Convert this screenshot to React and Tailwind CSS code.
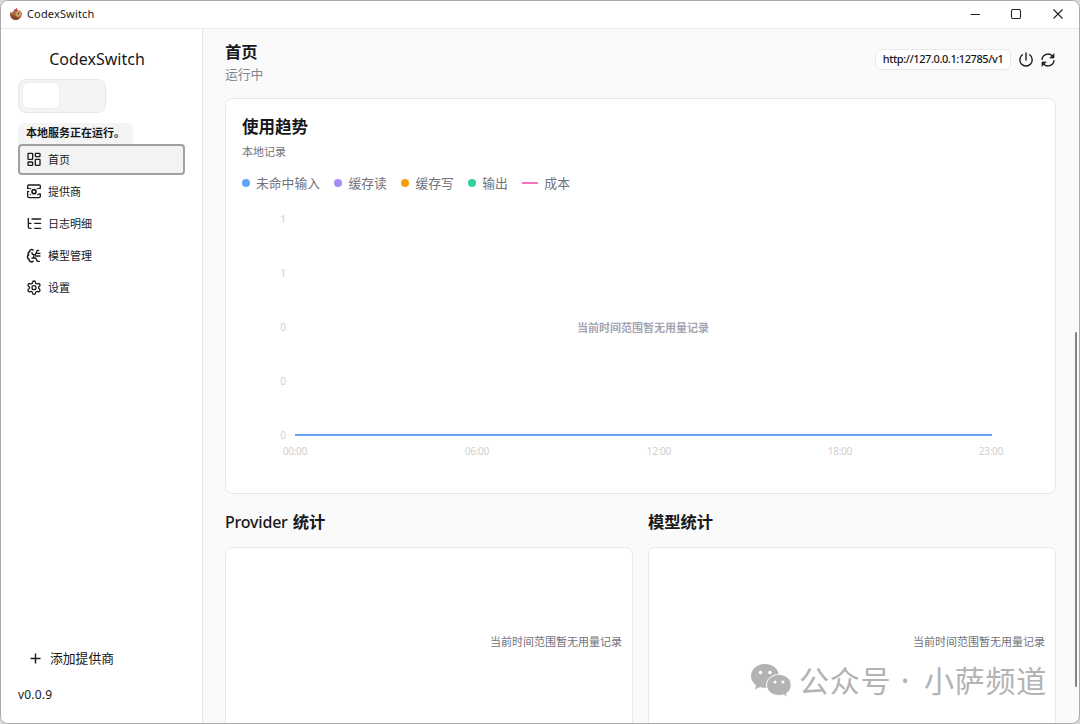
import React from "react";

const NAV = [
  { label: "首页", icon: "home", active: true },
  { label: "提供商", icon: "provider" },
  { label: "日志明细", icon: "logs" },
  { label: "模型管理", icon: "model" },
  { label: "设置", icon: "settings" },
];

const LEGEND = [
  { label: "未命中输入", dot: "bg-[#60a5fa]" },
  { label: "缓存读", dot: "bg-[#a78bfa]" },
  { label: "缓存写", dot: "bg-[#f59e0b]" },
  { label: "输出", dot: "bg-[#34d399]" },
];

const EMPTY = "当前时间范围暂无用量记录";

function NavIcon({ name }) {
  const paths = {
    home: (
      <>
        <rect x="3" y="2.500" width="7" height="9" rx="1" />
        <rect x="14" y="2.500" width="7" height="5" rx="1" />
        <rect x="14" y="11.500" width="7" height="9" rx="1" />
        <rect x="3" y="15.500" width="7" height="5" rx="1" />
      </>
    ),
    provider: (
      <>
        <path d="M2.500 7V3.500a1.500 1.500 0 0 1 1.500-1.500h16a1.500 1.500 0 0 1 1.500 1.500V7H19" />
        <path d="M2.500 11.500H4M2.500 11.500V19a2 2 0 0 0 2 2h15a2 2 0 0 0 2-2v-3.500H19" />
        <path d="M2.500 7H5M6.500 16.500h.1M17.500 16.500h.1M17 7.500h.1M7 7.500h.1" />
        <circle cx="12" cy="12" r="3" strokeWidth="2.400" />
      </>
    ),
    logs: <path d="M3.500 4v13a2 2 0 0 0 2 2H7.500M3.500 11.500h4M9 5h13M13 11.500h9M13 19h9" />,
    model: (
      <>
        <path strokeWidth="2.300" d="M10.500 3.500C8.500 1.800 5.500 3 5.500 6 3 7 2.500 9.500 4 11 1.300 12.500 1.700 16.500 4.500 17.500 4.500 20.500 8 22.500 10.500 20.500" />
        <path d="M9 7.500c0 2 1 3 3 3h2l3-6.500h2M11.500 10.500v5M9 15.500h5.500l2.500 5h3M14.500 12.500H21M16.500 8.500H21" />
      </>
    ),
    settings: (
      <>
        <path d="M12.220 2h-.44a2 2 0 0 0-2 2v.18a2 2 0 0 1-1 1.730l-.43.25a2 2 0 0 1-2 0l-.15-.08a2 2 0 0 0-2.730.73l-.22.38a2 2 0 0 0 .73 2.730l.15.1a2 2 0 0 1 1 1.720v.51a2 2 0 0 1-1 1.740l-.15.09a2 2 0 0 0-.73 2.730l.22.38a2 2 0 0 0 2.730.73l.15-.08a2 2 0 0 1 2 0l.43.25a2 2 0 0 1 1 1.730V20a2 2 0 0 0 2 2h.44a2 2 0 0 0 2-2v-.18a2 2 0 0 1 1-1.730l.43-.25a2 2 0 0 1 2 0l.15.08a2 2 0 0 0 2.730-.73l.22-.39a2 2 0 0 0-.73-2.730l-.15-.08a2 2 0 0 1-1-1.740v-.5a2 2 0 0 1 1-1.740l.15-.09a2 2 0 0 0 .73-2.730l-.22-.38a2 2 0 0 0-2.730-.73l-.15.08a2 2 0 0 1-2 0l-.43-.25a2 2 0 0 1-1-1.730V4a2 2 0 0 0-2-2z" />
        <circle cx="12" cy="12" r="3" />
      </>
    ),
  };
  return (
    <svg viewBox="0 0.5 24 24" className="size-4 shrink-0" fill="none" stroke="#1c1c1f" strokeWidth="2" strokeLinecap="round" strokeLinejoin="round">
      {paths[name]}
    </svg>
  );
}

function AppLogo() {
  return (
    <svg viewBox="0 0 14 14" className="mb-[2px] size-[14px]">
      <path d="M1.500 4.500 2.500 6 5 3.500 9 3.200 12 4l1 3-1 3.500-3.500 2.500H5L2 10.500 1 7z" fill="#a9683c" />
      <path d="M6.500 5.500 9.500 3.500 12 4.500 12.500 8 10 10 7 9z" fill="#cf9a68" />
      <path d="M1 6.500 4 8.500l4 1.500 2.500 1L8.500 13H5L2 10.800z" fill="#84492a" />
      <path d="M5.500 4 5.300 2 6.500 2.200 7.500.8 8.500 2.500 8 4z" fill="#c93d4d" />
      <circle cx="9.500" cy="6.500" r=".7" fill="#3b2418" />
    </svg>
  );
}

function TitleBar() {
  return (
    <header className="flex h-7 shrink-0 items-center border-b border-[#ebebeb] bg-white pl-2">
      <AppLogo />
      <span className="ml-1 -mt-px text-[11px] leading-4 tracking-[0.15px]">CodexSwitch</span>
      <svg viewBox="0 0 110 28" className="mr-[2px] ml-auto h-7 w-[110px]" fill="none" stroke="#222" strokeWidth="1.100">
        <path d="M3.500 13.500h9.500" />
        <rect x="44.500" y="8.500" width="9" height="9" rx="1.200" />
        <path d="M86.500 8.500l9 9M95.500 8.500l-9 9" />
      </svg>
    </header>
  );
}

function Sidebar() {
  return (
    <aside className="flex w-[202px] shrink-0 flex-col border-r border-[#e5e5e5] bg-white px-[17px]">
      <h1 className="mt-[18px] pr-[9px] text-center text-[16px] leading-6">CodexSwitch</h1>
      <div className="mt-2 flex h-[34px] w-[88px] rounded-[8px] border border-[#e8e8e8] bg-[#f4f4f5] p-[3px] pt-[2px]">
        <div className="w-[38px] rounded-[6px] border border-[#ececec] bg-white" />
      </div>
      <div className="mt-[10px] flex h-[21px] w-[115px] items-center rounded-t-[6px] bg-[#f4f4f5] pl-2 text-[11px] font-semibold">
        本地服务正在运行。
      </div>
      <nav className="flex flex-col gap-px">
        {NAV.map((item) => (
          <div
            key={item.label}
            className={
              item.active
                ? "flex h-[31px] items-center gap-[6px] rounded-[4px] border-2 border-[#9f9fa5] bg-[#f3f3f3] pl-[6px] text-[11px]"
                : "flex h-[31px] items-center gap-[6px] pl-2 text-[11px]"
            }
          >
            <NavIcon name={item.icon} />
            <span className="pt-px">{item.label}</span>
          </div>
        ))}
      </nav>
      <div className="mt-auto flex h-8 items-center gap-[9px] pl-3 text-[12.8px]">
        <svg viewBox="0 0 11 11" className="mb-px size-[11px]" stroke="#1c1c1f" strokeWidth="1.400">
          <path d="M5.500.5v10M.5 5.500h10" />
        </svg>
        <span>添加提供商</span>
      </div>
      <div className="mt-[10px] mb-[18px] text-[12px] leading-5 tracking-[0.2px]">v0.0.9</div>
    </aside>
  );
}

function PowerIcon() {
  return (
    <svg viewBox="0 0 16 16" className="size-4" fill="none" stroke="#1c1c1f" strokeWidth="1.400" strokeLinecap="round">
      <path d="M8 1v7M4.300 2.800a6.200 6.200 0 1 0 7.400 0" />
    </svg>
  );
}

function RefreshIcon() {
  return (
    <svg viewBox="0 0 24 24" className="size-4" fill="none" stroke="#1c1c1f" strokeWidth="2" strokeLinecap="round" strokeLinejoin="round">
      <path d="M3 11a9 9 0 0 1 16-4.500M21 13a9 9 0 0 1-16 4.500" />
      <path d="M21 3v6h-6zM3 21v-6h6z" fill="#1c1c1f" strokeWidth="1" />
    </svg>
  );
}

function TrendChart() {
  const yTicks = [
    ["1", 219],
    ["1", 273],
    ["0", 327],
    ["0", 381],
    ["0", 435],
  ];
  const xTicks = [
    ["00:00", 295],
    ["06:00", 477],
    ["12:00", 659],
    ["18:00", 840],
    ["23:00", 991],
  ];
  return (
    <svg viewBox="242 205 798 260" className="h-[260px] w-[798px]">
      <g fill="#cfcfcf" fontSize="10">
        {yTicks.map(([t, y]) => (
          <text key={y} x="286" y={y + 3.5} textAnchor="end">{t}</text>
        ))}
        {xTicks.map(([t, x]) => (
          <text key={x} x={x} y="455" textAnchor="middle" textLength="24.500">{t}</text>
        ))}
      </g>
      <path d="M295 435h697" stroke="#6ba1f5" strokeWidth="2" />
      <text x="643" y="332" textAnchor="middle" fontSize="11" fontWeight="700" fill="#a3a5b1">{EMPTY}</text>
    </svg>
  );
}

function StatPanel({ latin, title }) {
  return (
    <section className="flex flex-1 flex-col">
      <h2 className="flex h-6 items-baseline gap-[5px] text-[16px] leading-[22px] font-medium">
        {latin && <span className="tracking-[-0.200px]">{latin}</span>}
        <span className="text-[16.300px] font-bold">{title}</span>
      </h2>
      <div className="mt-3 flex h-[190px] justify-end rounded-[7px] border border-[#e8e8e8] bg-white pt-[86px] pr-[10px] text-[11px] leading-4 text-[#71717a]">
        {EMPTY}
      </div>
    </section>
  );
}

function Watermark() {
  return (
    <div className="absolute top-[660px] left-[749px] flex h-10 items-center text-[#b3b3b3]">
      <svg viewBox="0 0 42 36" className="h-9 w-[42px]">
        <path d="M15 1C7 1 1 6.200 1 13c0 4 2 7 5 9l-1 4.500 5-2.500c2 .6 3 .7 5 .7 8 0 14-5.200 14-11.700S23 1 15 1z" fill="currentColor" />
        <path d="M29 11.500c-7 0-12.500 4.600-12.500 10.500S22 32.500 29 32.500c1.500 0 3-.2 4.200-.6L37.500 34l-1-3.500c3-2 4.700-5 4.700-8.500 0-5.900-5.200-10.500-12.200-10.500z" fill="currentColor" stroke="#fff" strokeWidth="1" />
        <g fill="#fff">
          <circle cx="10.500" cy="9.500" r="1.800" />
          <circle cx="20" cy="9.500" r="1.800" />
          <circle cx="25" cy="19" r="1.500" />
          <circle cx="33" cy="19" r="1.500" />
        </g>
      </svg>
      <span className="ml-[7px] text-[30px] leading-10 tracking-[0.7px]">公众号</span>
      <span className="w-[31px] pr-[3px] text-center text-[30px] leading-10 font-medium">·</span>
      <span className="ml-[2px] text-[30px] leading-10 tracking-[0.7px]">小萨频道</span>
    </div>
  );
}

export default function App() {
  return (
    <div className="h-[724px] w-[1080px] overflow-hidden bg-[#d8d8d8] font-['Noto_Sans','Noto_Sans_CJK_SC',sans-serif] text-[#18181b]">
      <div className="relative flex h-[724px] w-[1080px] flex-col overflow-hidden rounded-[8px] border border-[#ababab] bg-[#fafafa]">
        <TitleBar />
        <div className="flex min-h-0 flex-1">
          <Sidebar />
          <main className="flex min-w-0 flex-1 flex-col overflow-hidden pt-[11px] pr-[23px] pl-[22px]">
            <div className="flex shrink-0 justify-between">
              <div>
                <h2 className="text-[16.300px] leading-6 font-bold">首页</h2>
                <p className="text-[12.800px] leading-5 text-[#85858c]">运行中</p>
              </div>
              <div className="mt-[9px] flex h-[21px] items-center gap-[7px]">
                <div className="flex h-[21px] w-[136px] items-center justify-center rounded-[6px] border border-[#e8e8e8] bg-white text-[11px] font-medium tracking-[-0.42px]">
                  http://127.0.0.1:12785/v1
                </div>
                <PowerIcon />
                <div className="-ml-px h-4">
                  <RefreshIcon />
                </div>
              </div>
            </div>
            <section className="mt-[14px] h-[396px] shrink-0 rounded-[8px] border border-[#e8e8e8] bg-white px-4 pt-4">
              <h2 className="text-[16.500px] leading-6 font-bold">使用趋势</h2>
              <p className="mt-[5px] text-[11px] leading-4 text-[#71717a]">本地记录</p>
              <div className="mt-[14px] flex h-5 items-center gap-[14.500px] text-[12.800px] text-[#71717a]">
                {LEGEND.map((item) => (
                  <span key={item.label} className="flex items-center gap-[6px]">
                    <i className={"mb-[2px] size-2 rounded-full " + item.dot} />
                    {item.label}
                  </span>
                ))}
                <span className="flex items-center gap-[6px]">
                  <i className="mb-[2px] h-[2px] w-4 bg-[#f472b6]" />
                  成本
                </span>
              </div>
              <div className="mt-[11px]">
                <TrendChart />
              </div>
            </section>
            <div className="mt-[17px] flex shrink-0 gap-[15px]">
              <StatPanel latin="Provider" title="统计" />
              <StatPanel title="模型统计" />
            </div>
          </main>
        </div>
        <div className="absolute top-[331px] right-[2px] h-[355px] w-[2px] rounded-full bg-[#858585]" />
        <Watermark />
      </div>
    </div>
  );
}
